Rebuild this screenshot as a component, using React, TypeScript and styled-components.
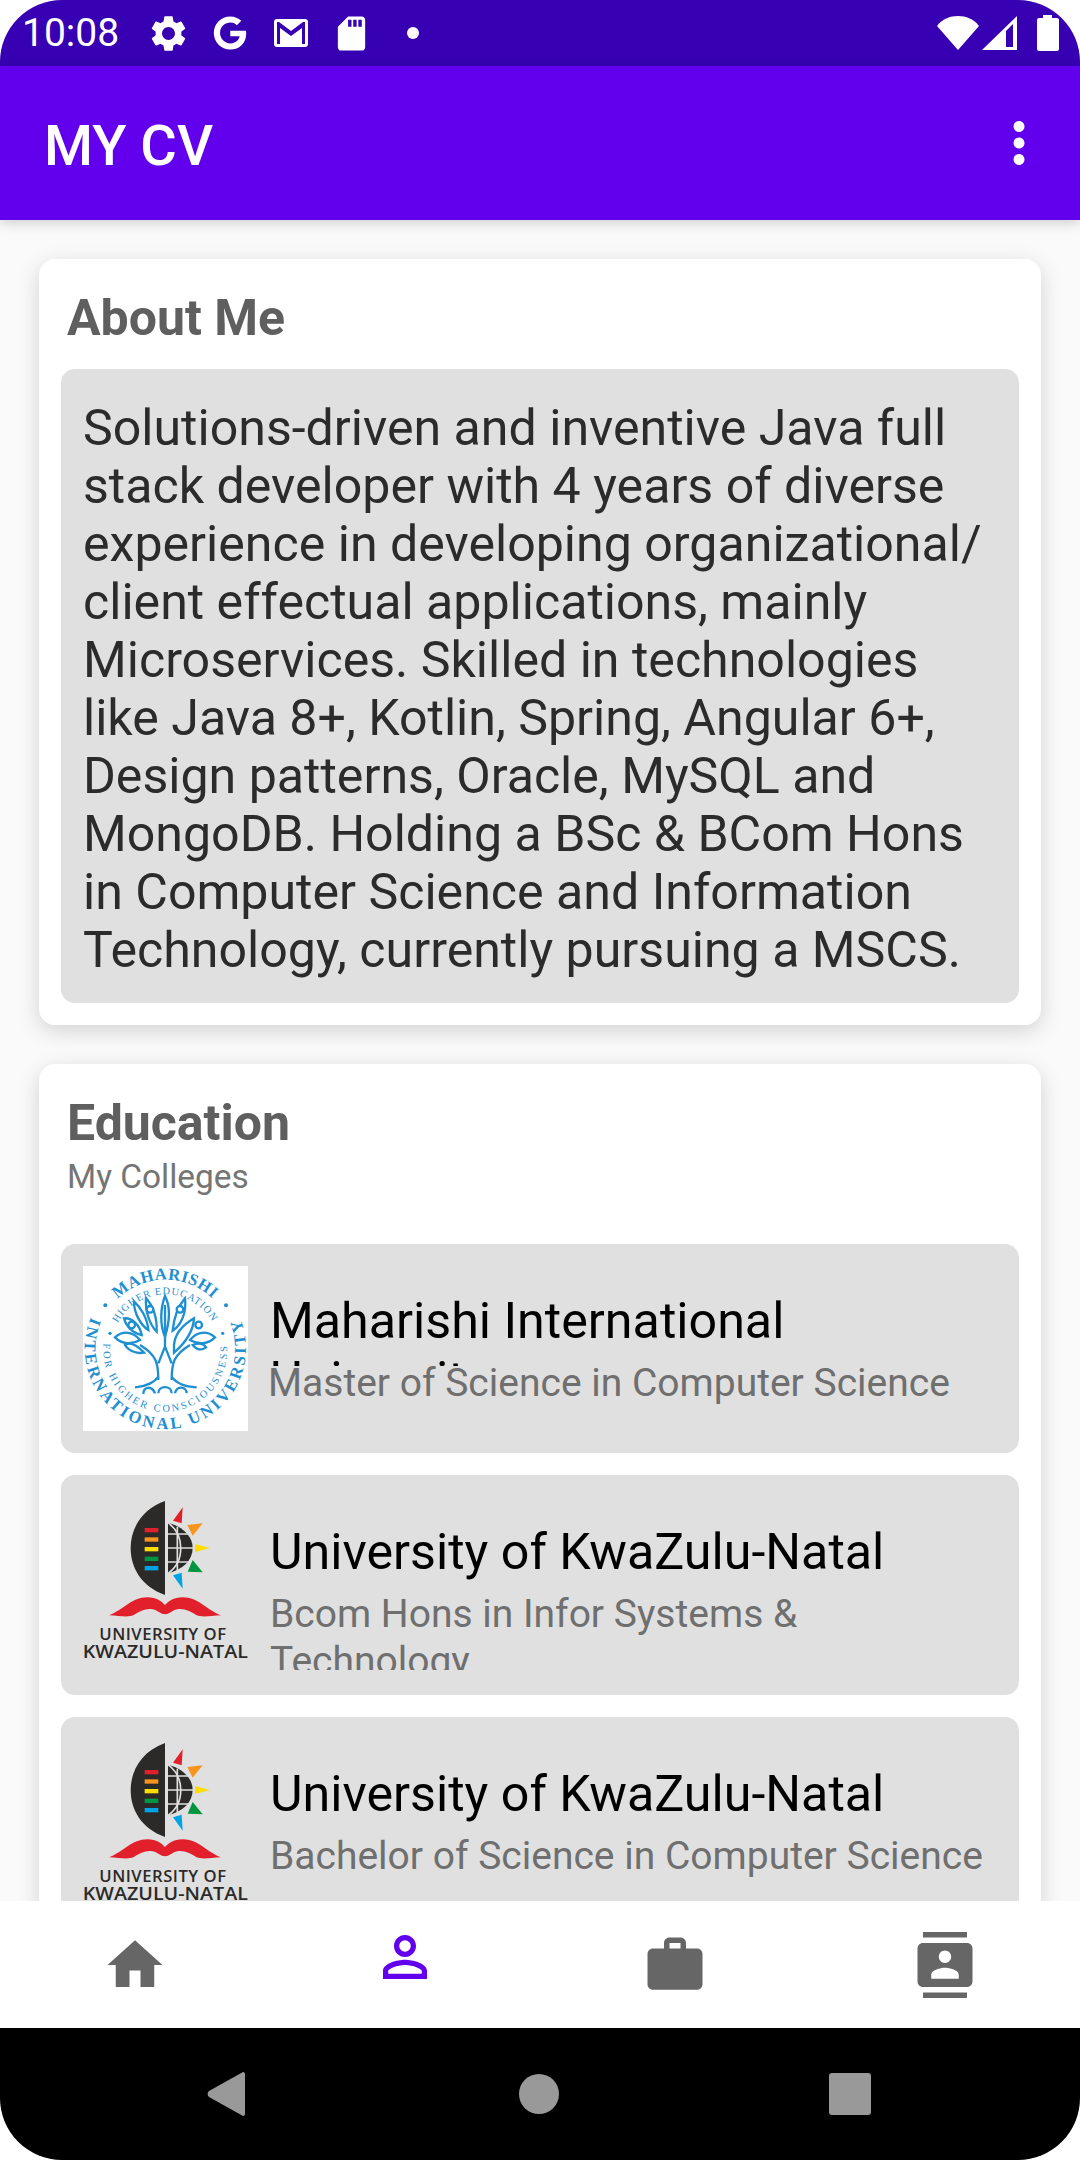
import { createGlobalStyle, styled } from "styled-components";
import { FaGoogle } from "react-icons/fa";
import {
  MdContacts,
  MdHome,
  MdMoreVert,
  MdPersonOutline,
  MdSdCard,
  MdSettings,
  MdWork,
} from "react-icons/md";

const GlobalStyle = createGlobalStyle`
  html, body {
    margin: 0;
    background: #fff;
    font-family: Roboto, "Liberation Sans", sans-serif;
  }
  * { box-sizing: border-box; }
`;

const Screen = styled.div`
  width: 1080px;
  height: 2160px;
  border-radius: 62px;
  overflow: hidden;
  display: flex;
  flex-direction: column;
  background: #fafafa;
`;

const StatusBar = styled.div`
  height: 66px;
  flex: none;
  background: #3700b3;
  color: #fff;
  display: flex;
  align-items: center;
  padding: 0 6px 0 22px;
`;

const Time = styled.span`
  width: 116px;
  font-size: 39px;
  line-height: 66px;
`;

const StatusSlot = styled.span<{ $w: number }>`
  width: ${(p) => p.$w}px;
  height: 66px;
  display: flex;
  align-items: center;
  justify-content: center;
`;

const Dot = styled.span`
  width: 12px;
  height: 12px;
  border-radius: 50%;
  background: #fff;
`;

const StatusRight = styled.div`
  margin-left: auto;
  display: flex;
  align-items: center;
`;

const AppBar = styled.header`
  height: 154px;
  flex: none;
  background: #6200ee;
  color: #fff;
  display: flex;
  align-items: center;
  justify-content: space-between;
  padding: 0 28px 0 44px;
  position: relative;
  z-index: 2;
  box-shadow: 0 3px 12px rgba(0, 0, 0, 0.18);
`;

const AppTitle = styled.h1`
  margin: 6px 0 0;
  font-size: 56px;
  font-weight: 500;
  line-height: 64px;
`;

const Content = styled.main`
  flex: 1;
  min-height: 0;
  overflow: hidden;
  padding: 39px 39px 0;
  display: flex;
  flex-direction: column;
  gap: 39px;
`;

const Card = styled.section`
  flex: none;
  background: #fff;
  border-radius: 16px;
  padding: 22px;
  box-shadow: 0 6px 22px rgba(0, 0, 0, 0.16);
`;

const CardTitle = styled.h2`
  margin: 9px 0 0;
  padding-left: 6px;
  font-size: 50px;
  line-height: 56px;
  font-weight: 700;
  color: #5f5f5f;
`;

const CardSub = styled.div`
  padding-left: 6px;
  margin-top: 4px;
  font-size: 33.4px;
  line-height: 44px;
  color: #757575;
`;

const AboutBox = styled.p`
  margin: 23px 0 0;
  padding: 30px 22px 24px;
  background: #e0e0e0;
  border-radius: 14px;
  font-size: 50.1px;
  line-height: 58px;
  color: #2b2b2b;
`;

const List = styled.div`
  margin-top: 45px;
  display: flex;
  flex-direction: column;
  gap: 22px;
`;

const Item = styled.article`
  display: flex;
  align-items: flex-start;
  gap: 22px;
  padding: 22px;
  background: #e0e0e0;
  border-radius: 14px;
`;

const Logo = styled.svg`
  width: 165px;
  height: 165px;
  flex: none;
  display: block;
`;

const ItemText = styled.div`
  flex: 1;
  min-width: 0;
  margin-top: 25px;
  padding-bottom: 3px;
`;

const ItemTitle = styled.div`
  height: 75px;
  overflow: hidden;
  font-size: 50.2px;
  line-height: 59px;
  color: #000;
`;

const ItemSub = styled.div<{ $shift?: number }>`
  margin-top: -6px;
  margin-left: ${(p) => p.$shift ?? 0}px;
  max-height: 79px;
  overflow: hidden;
  font-size: 39px;
  line-height: 47px;
  color: #6f6f6f;
`;

const BottomNav = styled.nav`
  height: 127px;
  flex: none;
  background: #fff;
  display: grid;
  grid-template-columns: repeat(4, 1fr);
  position: relative;
  z-index: 2;
`;

const NavItem = styled.div<{ $active?: boolean }>`
  display: flex;
  align-items: center;
  justify-content: center;
  color: ${(p) => (p.$active ? "#6200ee" : "#666666")};
  padding-bottom: ${(p) => (p.$active ? "16px" : "0")};
`;

const SystemNav = styled.div`
  height: 132px;
  flex: none;
  background: #000;
  display: grid;
  grid-template-columns: 1fr auto 1fr;
  align-items: center;
  padding: 0 209px 0 207px;

  & > svg:last-child {
    justify-self: end;
  }
`;

const leaves = [
  "M225 322 C250 300 280 305 300 330 C275 345 245 342 225 322Z",
  "M252 265 C275 262 300 285 305 315 C280 310 258 290 252 265Z",
  "M282 215 C300 230 322 262 325 300 C302 285 282 250 282 215Z",
  "M318 205 C338 225 352 262 350 305 C330 285 315 245 318 205Z",
  "M375 198 C389 225 392 265 375 320 C359 285 361 235 375 198Z",
  "M398 302 C402 262 415 228 435 205 C440 245 425 285 398 302Z",
  "M402 345 C405 310 428 285 462 265 C460 300 440 335 402 368Z",
  "M450 330 C470 305 500 300 525 322 C505 342 475 345 450 330Z",
  "M312 368 C290 345 270 335 255 345 C265 362 290 372 312 368Z",
  "M458 345 C475 338 490 340 498 352 C485 362 470 360 458 345Z",
];

const MiuLogo = () => (
  <Logo viewBox="129 108 495 495">
    <rect x="129" y="108" width="495" height="495" fill="#fff" />
    <defs>
      <path id="miu-top" d="M233 207 A205 205 0 0 1 519 207" />
      <path id="miu-bottom" d="M153 261 A242 242 0 1 0 599 261" />
      <path id="miu-inner-top" d="M233 279 A162 162 0 0 1 519 279" />
      <path id="miu-inner-bottom" d="M191 340 A186 186 0 1 0 561 340" />
    </defs>
    <g fontFamily='"Liberation Serif", serif' fill="#1e8fd0" fontWeight="700">
      <text fontSize="50">
        <textPath href="#miu-top" textLength="314">MAHARISHI</textPath>
      </text>
      <text fontSize="50">
        <textPath href="#miu-bottom" textLength="945">INTERNATIONAL UNIVERSITY</textPath>
      </text>
      <text fontSize="31" fontWeight="400">
        <textPath href="#miu-inner-top" textLength="345">HIGHER EDUCATION</textPath>
      </text>
      <text fontSize="31" fontWeight="400">
        <textPath href="#miu-inner-bottom" textLength="615">FOR HIGHER CONSCIOUSNESS</textPath>
      </text>
      <circle cx="196" cy="226" r="6" />
      <circle cx="558" cy="226" r="6" />
      <circle cx="210" cy="310" r="5" />
      <circle cx="548" cy="310" r="5" />
    </g>
    <g fill="none" stroke="#1e8fd0" strokeWidth="7">
      {leaves.map((d) => (
        <path key={d} d={d} />
      ))}
      <path d="M355 450 C355 400 350 375 300 345 M395 450 C395 400 400 375 450 345 M355 400 L375 350 L395 400 M375 350 V225" />
      <path d="M285 472 C320 470 345 455 355 440 M470 472 C430 470 405 455 395 440 M310 492 C310 470 335 465 345 490 M355 490 C355 465 395 465 395 490 M405 490 C410 465 440 470 440 490" />
      <circle cx="330" cy="238" r="10" fill="#fff" />
      <circle cx="420" cy="238" r="10" fill="#fff" />
      <circle cx="275" cy="285" r="10" fill="#fff" />
      <circle cx="476" cy="285" r="10" fill="#fff" />
    </g>
  </Logo>
);

const UkznLogo = () => (
  <Logo viewBox="69 81 495 495">
    <path d="M315 93 C245 118 212 175 212 234 C212 295 245 350 315 375Z" fill="#2b2a29" />
    <rect x="254" y="174" width="41" height="13" fill="#e2202c" />
    <rect x="254" y="202" width="41" height="13" fill="#f7941d" />
    <rect x="254" y="231" width="41" height="13" fill="#ffdd00" />
    <rect x="254" y="260" width="41" height="13" fill="#00963f" />
    <rect x="254" y="288" width="41" height="13" fill="#00a4e4" />
    <path d="M324 158 C370 170 398 200 398 234 C398 270 370 298 324 310Z" fill="#2b2a29" />
    <g fill="none" stroke="#e0e0e0" strokeWidth="5">
      <path d="M324 158 C375 195 375 275 324 310" />
      <path d="M320 192 H385 M320 234 H400 M320 276 H385 M352 170 V300" />
    </g>
    <polygon points="339,152 368,112 365,160" fill="#e2202c" />
    <polygon points="382,165 428,160 398,197" fill="#f7941d" />
    <polygon points="405,222 449,234 405,246" fill="#ffdd00" />
    <polygon points="383,305 428,307 398,270" fill="#00963f" />
    <polygon points="339,316 368,356 365,308" fill="#00a4e4" />
    <path
      d="M147 436 C190 420 215 382 262 382 C290 382 305 395 315 405 C325 395 340 382 368 382 C415 382 440 420 483 436 C450 438 425 442 410 436 C390 422 370 414 352 418 C335 422 328 433 315 433 C302 433 295 422 278 418 C260 414 240 422 220 436 C205 442 180 438 147 436Z"
      fill="#e2202c"
    />
    <g fontFamily='"Open Sans", "Liberation Sans", sans-serif' fill="#2b2a29" fontWeight="600" textAnchor="middle">
      <text x="308" y="509" fontSize="50" textLength="380" lengthAdjust="spacing">UNIVERSITY OF</text>
      <text x="316" y="564" fontSize="56" textLength="496" lengthAdjust="spacingAndGlyphs">KWAZULU-NATAL</text>
    </g>
  </Logo>
);

const App = () => (
  <>
    <GlobalStyle />
    <Screen>
      <StatusBar>
        <Time>10:08</Time>
        <StatusSlot $w={61}>
          <MdSettings size={43} />
        </StatusSlot>
        <StatusSlot $w={61}>
          <FaGoogle size={34} />
        </StatusSlot>
        <StatusSlot $w={61}>
          <svg width="34" height="28" viewBox="0 0 34 28">
            <path
              d="M3 0h28a3 3 0 0 1 3 3v22a3 3 0 0 1-3 3H3a3 3 0 0 1-3-3V3a3 3 0 0 1 3-3zm3 25V9l11 8 11-8v16h3V3h-2L17 12 5 3H3v22z"
              fill="#fff"
              fillRule="evenodd"
            />
          </svg>
        </StatusSlot>
        <StatusSlot $w={61}>
          <MdSdCard size={41} />
        </StatusSlot>
        <StatusSlot $w={61}>
          <Dot />
        </StatusSlot>
        <StatusRight>
          <StatusSlot $w={42}>
            <svg width="42" height="36" viewBox="0 0 42 36">
              <path d="M0 11C5 4 13 1 21 1s16 3 21 10L21 35z" fill="#fff" />
            </svg>
          </StatusSlot>
          <StatusSlot $w={42}>
            <svg width="36" height="36" viewBox="0 0 36 36">
              <path d="M35 1V35H0z" fill="#fff" />
              <path d="M24 16l7-7v23h-7z" fill="#3700b3" />
            </svg>
          </StatusSlot>
          <StatusSlot $w={53}>
            <svg width="22" height="36" viewBox="0 0 22 36">
              <path d="M6 0h9v3h5a2 2 0 0 1 2 2v29a2 2 0 0 1-2 2H2a2 2 0 0 1-2-2V5a2 2 0 0 1 2-2h4z" fill="#fff" />
            </svg>
          </StatusSlot>
        </StatusRight>
      </StatusBar>
      <AppBar>
        <AppTitle>MY CV</AppTitle>
        <MdMoreVert size={66} />
      </AppBar>
      <Content>
        <Card>
          <CardTitle>About Me</CardTitle>
          <AboutBox>
            Solutions-driven and inventive Java full stack developer with 4 years of diverse
            experience in developing organizational/ client effectual applications, mainly
            Microservices. Skilled in technologies like Java 8+, Kotlin, Spring, Angular 6+,
            Design patterns, Oracle, MySQL and MongoDB. Holding a BSc &amp; BCom Hons in Computer
            Science and Information Technology, currently pursuing a MSCS.
          </AboutBox>
        </Card>
        <Card>
          <CardTitle>Education</CardTitle>
          <CardSub>My Colleges</CardSub>
          <List>
            <Item>
              <MiuLogo />
              <ItemText>
                <ItemTitle>Maharishi International University</ItemTitle>
                <ItemSub $shift={-2}>Master of Science in Computer Science</ItemSub>
              </ItemText>
            </Item>
            <Item>
              <UkznLogo />
              <ItemText>
                <ItemTitle>University of KwaZulu-Natal</ItemTitle>
                <ItemSub>Bcom Hons in Infor Systems &amp; Technology</ItemSub>
              </ItemText>
            </Item>
            <Item>
              <UkznLogo />
              <ItemText>
                <ItemTitle>University of KwaZulu-Natal</ItemTitle>
                <ItemSub>Bachelor of Science in Computer Science</ItemSub>
              </ItemText>
            </Item>
          </List>
        </Card>
      </Content>
      <BottomNav>
        <NavItem>
          <MdHome size={66} />
        </NavItem>
        <NavItem $active>
          <MdPersonOutline size={66} />
        </NavItem>
        <NavItem>
          <MdWork size={66} />
        </NavItem>
        <NavItem>
          <MdContacts size={66} />
        </NavItem>
      </BottomNav>
      <SystemNav>
        <svg width="38" height="46" viewBox="0 0 38 46">
          <path d="M36 1a2 2 0 0 1 2 2v40a2 2 0 0 1-2 2L2 26a4 4 0 0 1 0-6z" fill="#999" />
        </svg>
        <svg width="40" height="40" viewBox="0 0 40 40">
          <circle cx="20" cy="20" r="20" fill="#999" />
        </svg>
        <svg width="42" height="42" viewBox="0 0 42 42">
          <rect width="42" height="42" rx="3" fill="#999" />
        </svg>
      </SystemNav>
    </Screen>
  </>
);

export default App;
